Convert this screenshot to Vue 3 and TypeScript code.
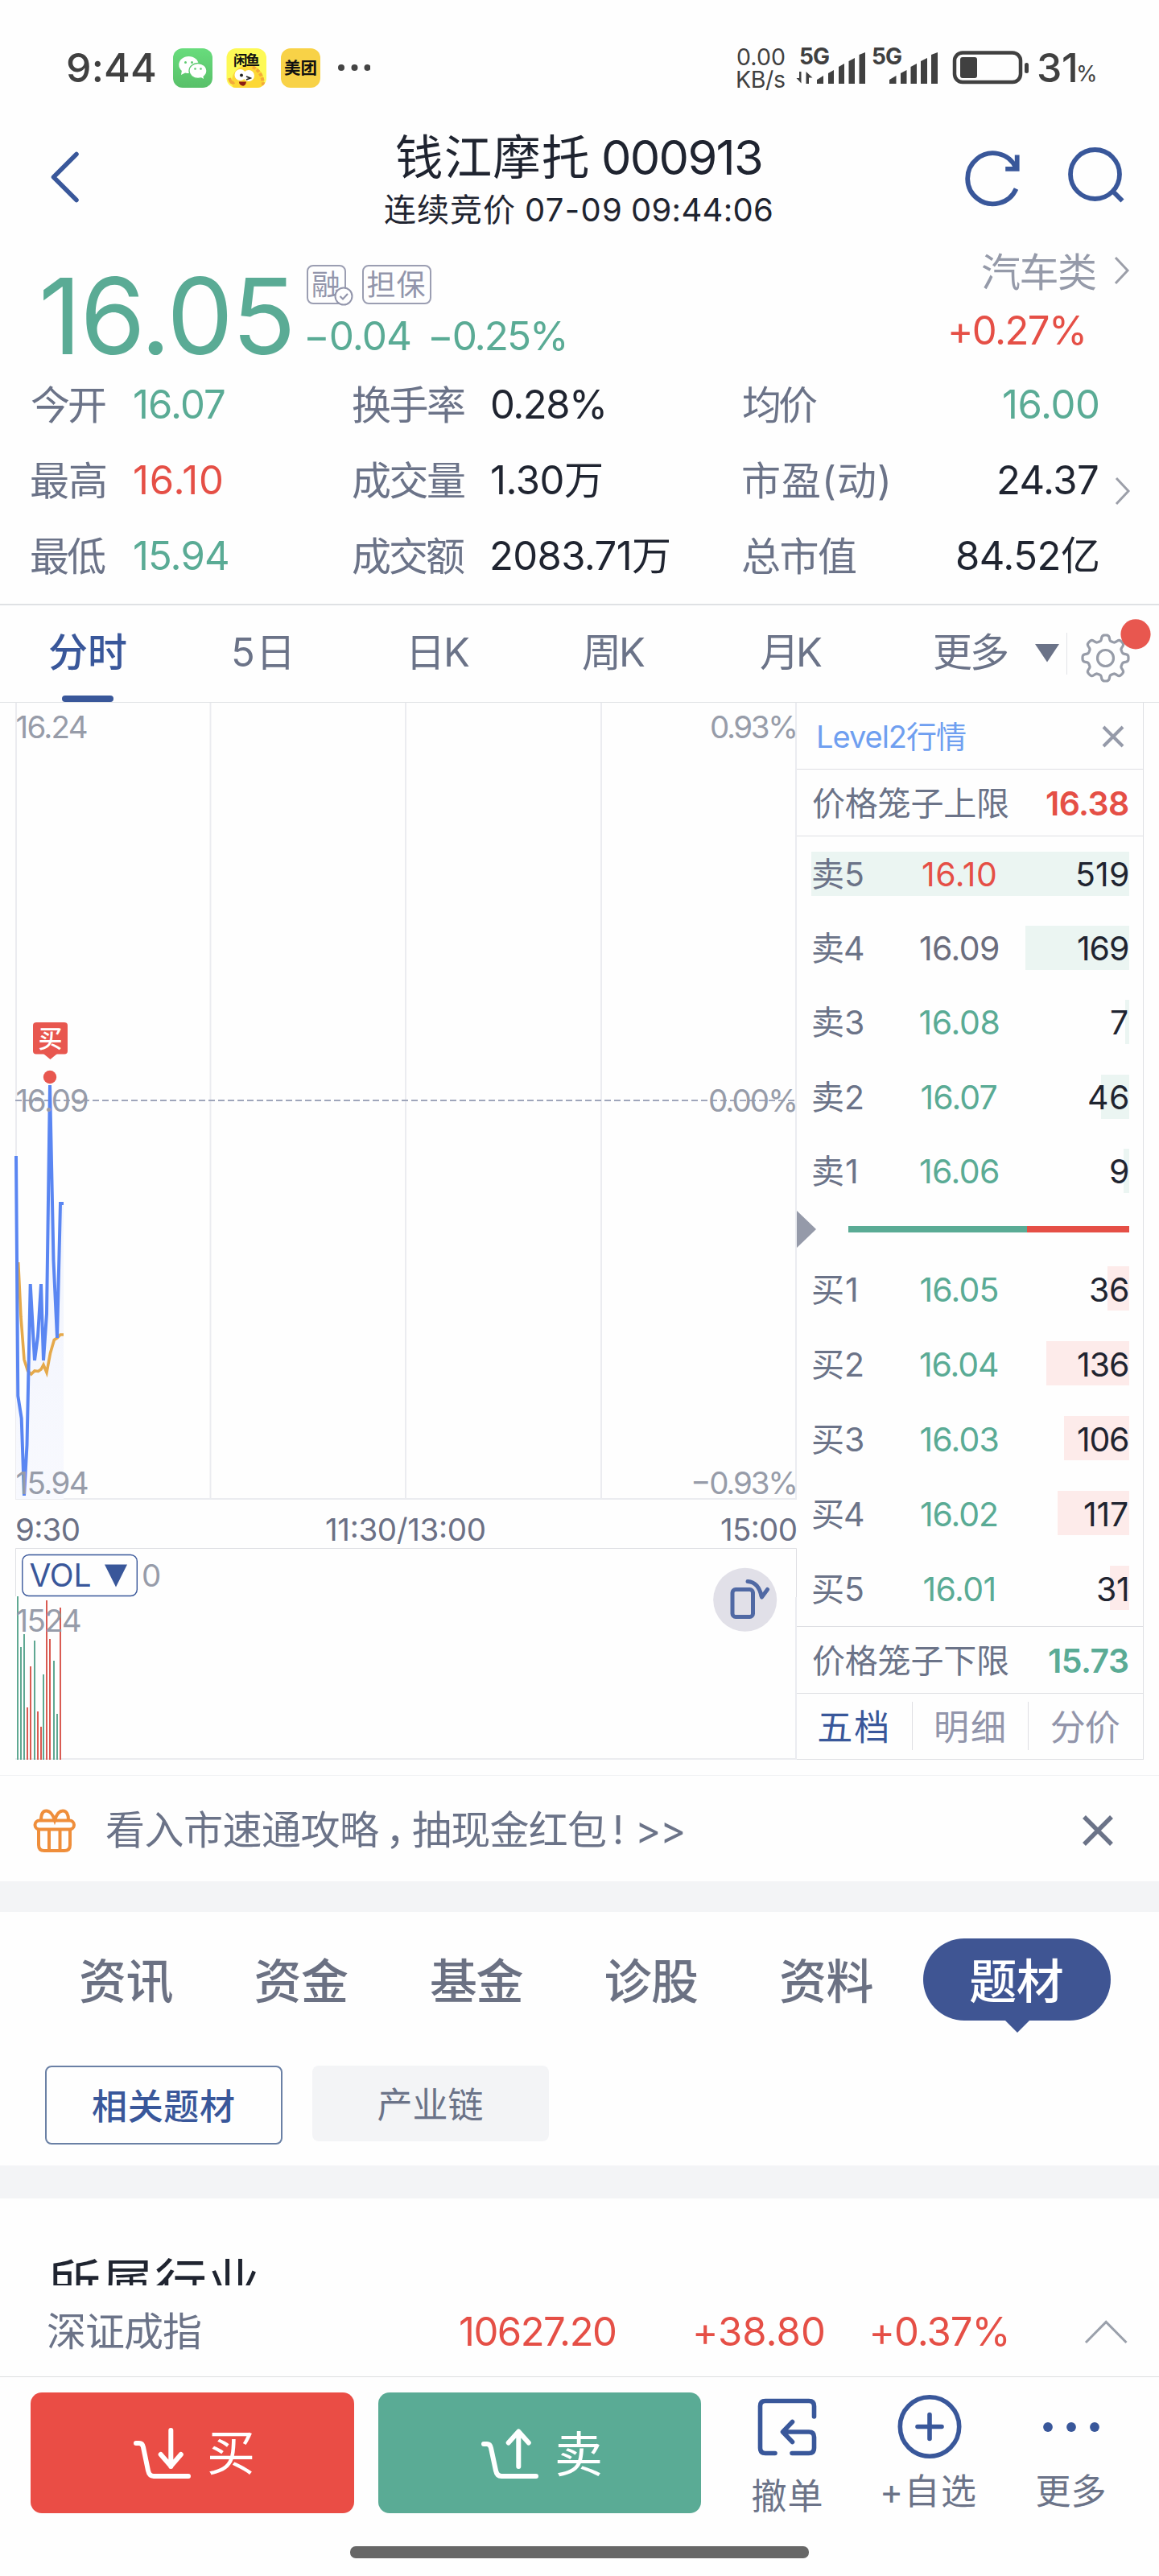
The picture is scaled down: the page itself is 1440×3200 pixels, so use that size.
<script setup lang="ts">
interface Stat { label: string; lw: number; value: string; vw: number; tone: string }
interface Level { name: string; nw: number; price: string; pw: number; tone: string; vol: number; vw: number }
interface Bar { x: number; top: number; up: boolean }

const FONT = '"Inter", "Noto Sans CJK SC", sans-serif'
const ctx = document.createElement('canvas').getContext('2d')!

// Tracks a label out to the given ink width and trims its side bearings,
// so that flex and grid tracks line up on the visible edge of the glyphs.
const vFit = {
  mounted(el: HTMLElement, binding: { value: number }) {
    const cs = getComputedStyle(el)
    const text = (el.textContent ?? '').trim()
    ctx.font = `${cs.fontWeight} ${cs.fontSize} ${FONT}`
    const m = ctx.measureText(text)
    const ink = m.actualBoundingBoxLeft + m.actualBoundingBoxRight
    const n = Array.from(text).length
    const ls = n > 1 ? (binding.value + 1 - ink) / (n - 1) : 0
    el.style.letterSpacing = `${ls}px`
    el.style.marginLeft = `${m.actualBoundingBoxLeft - 1}px`
    el.style.marginRight = `${-(ls + m.width - m.actualBoundingBoxRight)}px`
  },
}

const stats: Stat[][] = [
  [
    { label: '今开', lw: 91, value: '16.07', vw: 111, tone: 'down' },
    { label: '换手率', lw: 138, value: '0.28%', vw: 138, tone: 'ink' },
    { label: '均价', lw: 91, value: '16.00', vw: 116, tone: 'down' },
  ],
  [
    { label: '最高', lw: 91, value: '16.10', vw: 107, tone: 'up' },
    { label: '成交量', lw: 138, value: '1.30万', vw: 135, tone: 'ink' },
    { label: '市盈(动)', lw: 179, value: '24.37', vw: 122, tone: 'ink' },
  ],
  [
    { label: '最低', lw: 91, value: '15.94', vw: 115, tone: 'down' },
    { label: '成交额', lw: 138, value: '2083.71万', vw: 219, tone: 'ink' },
    { label: '总市值', lw: 139, value: '84.52亿', vw: 174, tone: 'ink' },
  ],
]

const periods = [
  { name: '分时', w: 95, on: true },
  { name: '5日', w: 68, on: false },
  { name: '日K', w: 70, on: false },
  { name: '周K', w: 76, on: false },
  { name: '月K', w: 75, on: false },
  { name: '更多', w: 90, on: false },
]

const asks: Level[] = [
  { name: '卖5', nw: 61, price: '16.10', pw: 90, tone: 'up', vol: 519, vw: 61 },
  { name: '卖4', nw: 62, price: '16.09', pw: 96, tone: 'flat', vol: 169, vw: 61 },
  { name: '卖3', nw: 61, price: '16.08', pw: 97, tone: 'down', vol: 7, vw: 20 },
  { name: '卖2', nw: 61, price: '16.07', pw: 93, tone: 'down', vol: 46, vw: 47 },
  { name: '卖1', nw: 53, price: '16.06', pw: 96, tone: 'down', vol: 9, vw: 21 },
]
const bids: Level[] = [
  { name: '买1', nw: 53, price: '16.05', pw: 95, tone: 'down', vol: 36, vw: 45 },
  { name: '买2', nw: 61, price: '16.04', pw: 96, tone: 'down', vol: 136, vw: 61 },
  { name: '买3', nw: 61, price: '16.03', pw: 95, tone: 'down', vol: 106, vw: 61 },
  { name: '买4', nw: 62, price: '16.02', pw: 94, tone: 'down', vol: 117, vw: 53 },
  { name: '买5', nw: 61, price: '16.01', pw: 87, tone: 'down', vol: 31, vw: 36 },
]
const depth = (v: number) => `${(v / 519) * 100}%`

const volume: Bar[] = [
  { x: 22, top: 1983, up: false }, { x: 26, top: 2046, up: false }, { x: 30, top: 2030, up: false },
  { x: 34, top: 2121, up: true }, { x: 38, top: 2070, up: true }, { x: 43, top: 2038, up: false },
  { x: 47, top: 2126, up: true }, { x: 51, top: 2145, up: true }, { x: 54, top: 2080, up: false },
  { x: 58, top: 1988, up: true }, { x: 62, top: 2036, up: true }, { x: 67, top: 2063, up: false },
  { x: 71, top: 2129, up: false }, { x: 75, top: 1997, up: true },
]
const trend = '20,1436 22.3,1734 26.7,1762 30,1858 33.5,1795 37.7,1595 43,1690 47,1660 51,1595 54,1690 58,1632 62,1348 66.5,1566 71,1662 75,1495 79,1495'
const average = '22.7,1568 26,1636 30,1689 34.5,1703 38.7,1707 43,1703 47.5,1703.5 51,1701 54,1695.5 58,1705 62.5,1681 67.3,1664.5 71,1662 75,1658 79,1658'

const sections = ['资讯', '资金', '基金', '诊股', '资料', '题材']

// Eight-toothed gear outline around the origin.
const gear = Array.from({ length: 192 }, (_, i) => {
  const a = (i / 192) * Math.PI * 2
  const r = 25.2 + 3.4 * Math.tanh(2.2 * Math.cos(8 * a))
  return `${(r * Math.cos(a)).toFixed(2)},${(r * Math.sin(a)).toFixed(2)}`
}).join(' ')
</script>

<template>
  <div class="screen">
    <div class="status">
      <span v-fit="108" class="clock">9:44</span>
      <svg class="apps" width="250" height="60" viewBox="210 54 250 60">
        <defs>
          <linearGradient id="wx" x1="0" y1="0" x2="0" y2="1"><stop offset="0" stop-color="#68dc7c" /><stop offset="1" stop-color="#58c069" /></linearGradient>
          <clipPath id="xy"><rect x="281.5" y="60" width="49.5" height="49" rx="12" /></clipPath>
        </defs>
        <rect x="215" y="60" width="49" height="49" rx="12" fill="url(#wx)" />
        <ellipse cx="234.500" cy="80.500" rx="12.200" ry="10.500" fill="#fff" /><path d="M226 87l-1 6 6-3z" fill="#fff" />
        <circle cx="230.500" cy="77.500" r="1.500" fill="#5ecb70" /><circle cx="238.500" cy="77.500" r="1.500" fill="#5ecb70" />
        <ellipse cx="246" cy="88" rx="11" ry="9.500" fill="#fff" stroke="#5ecb70" stroke-width="1.300" /><path d="M248 95l5 3-1-5z" fill="#fff" />
        <circle cx="242.500" cy="85.500" r="1.300" fill="#5ecb70" /><circle cx="249.500" cy="85.500" r="1.300" fill="#5ecb70" />
        <g clip-path="url(#xy)">
          <rect x="281" y="60" width="51" height="50" fill="#fdf955" />
          <circle cx="308" cy="101" r="20" fill="#fdd835" />
          <path d="M314 83q14 8 13 26" fill="none" stroke="#f3a93a" stroke-width="4" stroke-dasharray="4 2" />
          <path d="M285 97q2 8 6 5" fill="none" stroke="#f3a93a" stroke-width="4" />
          <circle cx="298.500" cy="93" r="7" fill="#fff" /><circle cx="309" cy="94" r="7" fill="#fff" />
          <circle cx="300" cy="93.500" r="2" fill="#222" /><path d="M306 99l5-2-5-2" fill="none" stroke="#222" stroke-width="1.800" />
          <path d="M297 101.500h9q-1 6-5 5-4-1-4-5z" fill="#8c1d12" />
        </g>
        <text x="290" y="81" class="app-name" font-size="17.500" textLength="33">闲鱼</text>
        <rect x="349" y="60" width="49" height="49" rx="12" fill="#f8d247" />
        <text x="353" y="91.500" class="app-name" font-size="20.500" textLength="41">美团</text>
        <g fill="#444"><circle cx="424" cy="84" r="4" /><circle cx="440.500" cy="84" r="4" /><circle cx="456.500" cy="84" r="4" /></g>
      </svg>
      <div class="rate"><span v-fit="58">0.00</span><span v-fit="58">KB/s</span></div>
      <svg class="signal" width="295" height="60" viewBox="985 54 295 60" fill="#404040">
        <g class="net"><text x="993" y="80" textLength="38">5G</text><text x="1083" y="80" textLength="38">5G</text></g>
        <path d="M995.500 89v14.500l-6-6.500h3.500v-8zM1001.500 104V89l8 7.500h-4.500v7.500z" />
        <path d="M1015 104v-5l8-5v10zM1029 104V91l7-4v17zM1042 104V83l7-4v25zM1054.500 104V76l7.500-4v32zM1067.500 104V68l7.500-3v39z" />
        <path d="M1105 104v-5l8.500-5v10zM1119 104V91l7.500-4v17zM1131.500 104V83l7.500-4v25zM1144 104V76l8-4v32zM1157 104V68l8-3v39z" />
        <rect x="1186" y="65.500" width="82" height="36.500" rx="10" fill="none" stroke="#404040" stroke-width="4.500" />
        <rect x="1193" y="71" width="21" height="26" rx="3" /><rect x="1273" y="78" width="5" height="13" rx="2.500" />
      </svg>
      <span v-fit="45" class="clock batt">31</span><div class="pct"><span v-fit="21">%</span></div>
    </div>

    <header class="head">
      <svg width="50" height="70" viewBox="56 185 50 70" class="back"><path d="M95 191.500L66.500 220l28.500 28.500" fill="none" stroke="#39579a" stroke-width="5.500" stroke-linecap="round" stroke-linejoin="round" /></svg>
      <div class="titles">
        <div class="title"><span v-fit="237">钱江摩托</span><span v-fit="195">000913</span></div>
        <div class="sub"><span v-fit="160">连续竞价</span><span v-fit="116">07-09</span><span v-fit="172">09:44:06</span></div>
      </div>
      <svg width="210" height="80" viewBox="1190 180 210 80" fill="none" stroke="#39579a" stroke-width="5.800" stroke-linecap="butt">
        <path d="M1262.500 234.500A31.500 31.500 0 1 1 1262 208" />
        <path d="M1263.700 192.500v17.300h-14.500" />
        <circle cx="1360.500" cy="216.500" r="30.500" /><path d="M1382 237l12.500 12.500" />
      </svg>
    </header>

    <section class="quote">
      <div class="price"><span v-fit="305">16.05</span></div>
      <div class="mid">
        <div class="tags">
          <span class="tag one"><span v-fit="32">融</span>
            <svg width="24" height="24" viewBox="0 0 24 24" class="tick"><circle cx="12" cy="12" r="10.500" fill="#fefefe" stroke="#9295ab" stroke-width="2" /><path d="M7.500 12l3.500 3.500 6-6.500" fill="none" stroke="#9295ab" stroke-width="2.200" /></svg>
          </span>
          <span class="tag two"><span v-fit="71">担保</span></span>
        </div>
        <div class="change"><span v-fit="127">−0.04</span><span v-fit="165">−0.25%</span></div>
      </div>
      <div class="sector">
        <div class="sector-name"><span v-fit="141">汽车类</span><svg width="22" height="40" viewBox="0 0 22 40"><path d="M4 4l15 16L4 36" fill="none" stroke="#9c9fa9" stroke-width="3" /></svg></div>
        <div class="sector-chg up"><span v-fit="164">+0.27%</span></div>
      </div>
    </section>

    <section class="stats">
      <div v-for="(row, i) in stats" :key="i" class="stat-row">
        <template v-for="s in row" :key="s.label">
          <div class="label"><span v-fit="s.lw">{{ s.label }}</span></div>
          <div class="value" :class="s.tone"><span v-fit="s.vw">{{ s.value }}</span></div>
        </template>
        <div class="more"><svg v-if="i === 1" width="22" height="40" viewBox="0 0 22 40"><path d="M4 4l15 16L4 36" fill="none" stroke="#9c9fa9" stroke-width="3" /></svg></div>
      </div>
    </section>

    <nav class="periods">
      <div v-for="p in periods" :key="p.name" class="period" :class="{ on: p.on }"><span v-fit="p.w">{{ p.name }}</span></div>
      <svg width="150" height="119" viewBox="1286 752 150 119">
        <path d="M1286 800h30l-15 22.500z" fill="#6b7388" />
        <path d="M1325.500 786v52" stroke="#e2e4e8" />
        <g transform="translate(1373.500 817.500)" fill="none" stroke="#979ca8" stroke-width="3.200"><polygon :points="gear" stroke-linejoin="round" /><circle r="10" /></g>
        <circle cx="1411" cy="787.800" r="18.600" fill="#e8574f" />
      </svg>
    </nav>

    <section class="market">
      <svg class="chart" width="990" height="1313" viewBox="0 873 990 1313">
        <defs><linearGradient id="area" x1="0" y1="0" x2="0" y2="1"><stop offset="0" stop-color="#eef2fc" /><stop offset="1" stop-color="#f8f9fe" /></linearGradient></defs>
        <path d="M20 873V1862M261.500 873V1862M504 873V1862M747 873V1862M989 873V1862M19 1862H990" fill="none" stroke="#ebecf0" stroke-width="2" />
        <path d="M19.500 1983V1923.500H989.500V1984" fill="none" stroke="#dedfe3" />
        <path d="M989 1984V2186M19 2185H990" stroke="#ebecf0" stroke-width="2" />
        <path :d="`M20,1862 L${trend} L79,1862z`" fill="url(#area)" />
        <path d="M19 1367H989" stroke="#9fa6bb" stroke-width="2" stroke-dasharray="8 4" />
        <polyline :points="average" fill="none" stroke="#e5a94b" stroke-width="3.600" />
        <polyline :points="trend" fill="none" stroke="#5a86f2" stroke-width="4" />
        <rect x="41" y="1270" width="43" height="39.500" rx="4" fill="#e8574f" /><path d="M54 1309h17l-8.500 7z" fill="#e8574f" />
        <text x="47.500" y="1301" font-size="30" fill="#fff" font-weight="500">买</text>
        <circle cx="62" cy="1338" r="8.200" fill="#e8574f" />
        <rect v-for="b in volume" :key="b.x" :x="b.x - 1" :y="b.top" width="2" :height="2186 - b.top" :fill="b.up ? '#d95b52' : '#5fa892'" />
        <g class="axis">
          <text x="19.500" y="916.500" textLength="90">16.24</text>
          <text x="19.500" y="1381" textLength="91">16.09</text>
          <text x="19.500" y="1855.500" textLength="91">15.94</text>
          <text x="882" y="916.500" textLength="110">0.93%</text>
          <text x="880" y="1381" textLength="112">0.00%</text>
          <text x="858" y="1855.500" textLength="134">−0.93%</text>
          <text x="19.500" y="2026.500" textLength="82">1524</text>
          <text x="176" y="1971">0</text>
        </g>
        <g class="time">
          <text x="19" y="1914" textLength="81">9:30</text>
          <text x="404" y="1914" textLength="200">11:30/13:00</text>
          <text x="895" y="1914" textLength="96">15:00</text>
        </g>
        <rect x="27.800" y="1931.500" width="142.500" height="51" rx="8" fill="#fefefe" stroke="#39579a" stroke-width="1.400" />
        <text x="36.500" y="1971" font-size="39" fill="#39579a" textLength="77">VOL</text><path d="M130 1943.500h28l-14 28z" fill="#39579a" />
        <circle cx="925.700" cy="1987.300" r="39.500" fill="#e1e0e8" />
        <g fill="none" stroke="#5069a4" stroke-width="5"><rect x="910" y="1974.500" width="25.500" height="34" rx="4" /><path d="M929 1964.500q13.500 1 17 18.500M953.500 1974.500l-7 9.500-2-7" stroke-linejoin="round" stroke-linecap="round" /></g>
      </svg>

      <aside class="book">
        <div class="cell l2"><span v-fit="182">Level2行情</span><svg width="28" height="28" viewBox="0 0 28 28"><path d="M2 2l24 24M26 2L2 26" stroke="#959aa9" stroke-width="4" /></svg></div>
        <div class="cell cage"><span v-fit="242">价格笼子上限</span><b v-fit="101" class="up">16.38</b></div>
        <div class="levels asks">
          <div v-for="l in asks" :key="l.name" class="level">
            <i class="depth" :style="{ width: depth(l.vol) }"></i>
            <div class="lv-name"><span v-fit="l.nw">{{ l.name }}</span></div>
            <div class="lv-price" :class="l.tone"><span v-fit="l.pw">{{ l.price }}</span></div>
            <div class="lv-vol"><span v-fit="l.vw">{{ l.vol }}</span></div>
          </div>
        </div>
        <div class="ratio"><svg width="24" height="46" viewBox="0 0 24 46"><path d="M0 0L24 23 0 46z" fill="#959aa9" /></svg><div class="ratio-bar"><i></i></div></div>
        <div class="levels bids">
          <div v-for="l in bids" :key="l.name" class="level">
            <i class="depth" :style="{ width: depth(l.vol) }"></i>
            <div class="lv-name"><span v-fit="l.nw">{{ l.name }}</span></div>
            <div class="lv-price" :class="l.tone"><span v-fit="l.pw">{{ l.price }}</span></div>
            <div class="lv-vol"><span v-fit="l.vw">{{ l.vol }}</span></div>
          </div>
        </div>
        <div class="cell cage low"><span v-fit="242">价格笼子下限</span><b v-fit="98" class="down">15.73</b></div>
        <div class="book-tabs"><div class="on"><span v-fit="84">五档</span></div><div><span v-fit="83">明细</span></div><div><span v-fit="84">分价</span></div></div>
      </aside>
    </section>

    <section class="promo">
      <svg width="56" height="58" viewBox="39 2242 56 58" fill="none" stroke="#ef8e3b" stroke-width="4">
        <rect x="43.500" y="2258.500" width="48.500" height="11" rx="5.500" />
        <path d="M48 2270v19q0 7 7 7h25q7 0 7-7v-19M61 2270v26M74.500 2270v26" />
        <path d="M51 2258c0-7 2-11.500 6.500-11.500S66 2252 68 2258c2-6 5.500-11.500 10-11.500S85 2251 85 2258" />
      </svg>
      <div class="promo-text"><span v-fit="338">看入市速通攻略</span><span class="comma">，</span><span v-fit="239">抽现金红包</span><span class="bang">!</span><span v-fit="54">&gt;&gt;</span></div>
      <svg width="38" height="38" viewBox="0 0 38 38"><path d="M2 2l34 34M36 2L2 36" stroke="#6b7388" stroke-width="5.500" /></svg>
    </section>

    <div class="band"></div>
    <section class="themes">
      <nav class="sections">
        <div v-for="(s, i) in sections" :key="s" class="sec" :class="{ on: i === 5 }"><span v-fit="113.5">{{ s }}</span></div>
      </nav>
      <div class="chips"><div class="chip on"><span v-fit="175">相关题材</span></div><div class="chip"><span v-fit="129">产业链</span></div></div>
    </section>
    <div class="band two"></div>
    <section class="industry"><span v-fit="258">所属行业</span></section>

    <section class="index">
      <div class="ix-name"><span v-fit="189">深证成指</span></div>
      <div class="ix-a"><span v-fit="191">10627.20</span></div>
      <div class="ix-b"><span v-fit="158">+38.80</span></div>
      <div class="ix-c"><span v-fit="166">+0.37%</span></div>
      <svg width="54" height="32" viewBox="1347 2879 54 32"><path d="M1349 2908l25.200-25.500L1399.500 2908" fill="none" stroke="#9aa0ab" stroke-width="3" /></svg>
    </section>

    <footer class="actions">
      <button class="buy">
        <svg width="76" height="68" viewBox="164 3010 76 68" fill="none" stroke="#fff" stroke-width="6" stroke-linecap="round" stroke-linejoin="round"><path d="M169 3032h4q4 0 5 5l6 29q1.500 7 7 7h43M212.300 3016v45M199.700 3046l12.600 14.500 12.500-14.500" /></svg>
        <span v-fit="56">买</span>
      </button>
      <button class="sell">
        <svg width="76" height="68" viewBox="596 3010 76 68" fill="none" stroke="#fff" stroke-width="6" stroke-linecap="round" stroke-linejoin="round"><path d="M601 3033h4q4 0 5 5l6 28q1.500 7 7 7h43M644.300 3061v-43M631.700 3031.500l12.600-14 12.500 14" /></svg>
        <span v-fit="56">卖</span>
      </button>
      <div class="act cancel">
        <svg width="76" height="86" viewBox="940 2972 76 86" fill="none" stroke="#39579a" stroke-width="5.600" stroke-linecap="round" stroke-linejoin="round"><path d="M1011.500 3002v-13q0-6.500-6.500-6.500h-54q-6.500 0-6.500 6.500v52q0 6.500 6.500 6.500h12M984 3047.500h21q6.500 0 6.500-6.500v-13.500q0-6.500-6.500-6.500h-31M984.500 3008.500L972.500 3021l12 12.500" /></svg>
        <span v-fit="85">撤单</span>
      </div>
      <div class="act add">
        <svg width="86" height="86" viewBox="1112 2972 86 86" fill="none" stroke="#39579a" stroke-width="5.600" stroke-linecap="round"><circle cx="1155" cy="3014.500" r="36.700" /><path d="M1155 2999.500v30M1140 3014.500h30" /></svg>
        <span v-fit="114">+自选</span>
      </div>
      <div class="act rest">
        <svg width="86" height="86" viewBox="1288 2972 86 86" fill="#39579a"><circle cx="1302" cy="3015" r="5.900" /><circle cx="1331" cy="3015" r="5.900" /><circle cx="1360" cy="3015" r="5.900" /></svg>
        <span v-fit="83">更多</span>
      </div>
    </footer>
    <div class="home"></div>
  </div>
</template>

<style>
body { background: #fefefe; }
</style>

<style scoped>
.screen { width: 1440px; height: 3200px; box-sizing: border-box; overflow: hidden; background: #fefefe; color: #6b7388; font-family: "Inter", "Noto Sans CJK SC", sans-serif; font-size: 49px; white-space: nowrap; display: flex; flex-direction: column; }
.screen * { box-sizing: border-box; }
.screen > * { flex-shrink: 0; }
svg { display: block; flex: none; }
span, b { flex: none; display: block; }
.up { color: #e54f46; }
.down { color: #5aab95; }
.flat { color: #6b6d7d; }
.ink { color: #1f2430; }

.status { height: 168px; display: flex; align-items: center; padding-left: 85px; color: #404040; line-height: 60px; }
.clock { font-size: 50px; font-weight: 500; }
.apps { margin-left: 17px; }
.app-name { font-weight: 700; fill: #111; }
.rate { margin-left: 457px; width: 58px; font-size: 28.500px; line-height: 27.500px; padding-top: 1px; }
.signal { margin-left: 10px; }
.net { font-size: 28px; font-weight: 700; }
.batt { position: relative; left: 11px; }
.pct { margin-left: 16px; font-size: 27px; line-height: 30px; padding-top: 16px; }

.head { height: 132px; display: flex; align-items: flex-start; padding-left: 56px; }
.back { margin-top: 17px; }
.titles { width: 480px; margin-left: 373px; color: #1f2430; }
.title { display: flex; gap: 20px; padding-left: 15px; font-size: 59.500px; line-height: 54px; }
.sub { display: flex; justify-content: space-between; font-size: 40px; line-height: 44px; margin-top: 17px; }
.head > svg:last-child { margin-left: 231px; margin-top: 12px; }

.quote { height: 155px; display: flex; padding: 29px 0 0 55px; }
.price { width: 326px; font-size: 131px; line-height: 96px; margin-top: 16px; color: #5aab95; }
.price, .change, .sector-chg, .label, .value, .lv-name, .lv-price, .lv-vol { display: flex; }
.mid { width: 321px; }
.tags { display: flex; gap: 20px; height: 49px; }
.tag { position: relative; display: flex; justify-content: center; border: 2px solid #9b9eb2; border-radius: 8px; font-size: 36px; line-height: 46px; color: #9295ab; }
.tag.one { width: 49px; }
.tag.two { width: 86px; }
.tick { position: absolute; right: -11px; bottom: -4px; }
.change { justify-content: space-between; padding-left: 2px; margin-top: 19px; line-height: 41px; font-size: 49.500px; color: #5aab95; }
.sector { margin-left: 480px; width: 222px; }
.sector-name { display: flex; justify-content: flex-end; gap: 20px; line-height: 46px; margin-top: -13px; height: 44px; color: #959aa9; }
.sector-chg { line-height: 40px; margin-top: 31px; }

.stats { padding: 0 0 13px 40px; border-bottom: 2px solid #dfe1e4; }
.stat-row { height: 94px; line-height: 94px; display: grid; grid-template-columns: 128px 271px 173px 312px 240px 200px 40px; align-items: center; }
.label { line-height: 92px; padding-top: 3px; }
.value:nth-child(6) { justify-content: flex-end; }
.more { padding: 26px 0 0 19px; line-height: 0; }

.periods { height: 121px; display: flex; padding-left: 62px; border-bottom: 1px solid #e1e3e6; line-height: 118px; }
.period { position: relative; display: flex; width: 229px; }
.period:nth-child(2) { width: 222px; }
.period:nth-child(3) { width: 212px; }
.period:nth-child(4) { width: 221px; }
.period:nth-child(5) { width: 216px; }
.period:nth-child(6) { width: 124px; }
.period.on { color: #39579a; font-weight: 500; }
.period.on::after { content: ""; position: absolute; left: 15px; bottom: 0; width: 64px; height: 8px; border-radius: 4px; background: #39579a; }

.market { display: flex; height: 1332px; }
.chart text { font-family: "Inter", "Noto Sans CJK SC", sans-serif; }
.axis { font-size: 38.500px; fill: #979ca9; }
.time { font-size: 38.500px; fill: #6b7085; }
.book { width: 431px; height: 1313px; border-right: 1px solid #dedfe3; border-bottom: 1px solid #dedfe3; display: flex; flex-direction: column; font-size: 41px; }
.cell { height: 83px; line-height: 84px; display: flex; align-items: center; justify-content: space-between; border-bottom: 1px solid #dedfe3; padding: 2px 18px 0 21px; }
.l2 { font-size: 38px; color: #6f9ff0; padding: 2px 23px 0 28px; }
.cage b { font-weight: 600; }
.low { border-top: 1px solid #dedfe3; height: 84px; }
.level { position: relative; height: 92.200px; line-height: 94px; margin: 0 17px 0 18px; padding: 0 2px 0 3px; display: grid; grid-template-columns: 120px 122px 1fr; }
.bids .level { height: 93px; line-height: 95px; }
.depth { position: absolute; right: 0; top: 19px; height: 55px; background: #ebf5f2; }
.bids .depth { background: #fdebea; top: 18px; }
.lv-name, .lv-price, .lv-vol { position: relative; }
.lv-price { justify-content: center; }
.lv-vol { justify-content: flex-end; color: #1f2430; }
.ratio { height: 55px; display: flex; align-items: center; }
.ratio-bar { margin-left: 40px; width: 349px; height: 8px; background: #e54f46; }
.ratio-bar i { display: block; width: 63.600%; height: 8px; background: #5aab95; }
.book-tabs { flex: 1; display: flex; align-items: center; font-size: 44px; color: #9295ab; }
.book-tabs div { width: 144px; height: 60px; line-height: 65px; display: flex; justify-content: center; }
.book-tabs div + div { border-left: 1px solid #dedfe3; }
.book-tabs .on { color: #39579a; padding-right: 3px; }

.promo { height: 132px; border-top: 1px solid #f1f2f4; display: flex; align-items: center; padding: 4px 57px 0 39px; }
.promo-text { display: flex; margin: 0 auto 0 38px; line-height: 60px; }
.comma { width: 43px; padding-left: 8px; font-feature-settings: "halt"; }
.bang { width: 42px; padding-left: 8px; }
.band { height: 38px; background: #f3f4f6; }
.band.two { height: 41px; }

.themes { height: 315px; padding-top: 33px; }
.sections { display: flex; padding-left: 49px; height: 102px; }
.sec { position: relative; width: 217.500px; display: flex; justify-content: center; font-size: 59px; line-height: 107px; font-weight: 500; color: #6b7183; }
.sec.on { margin-left: 10px; width: 233px; border-radius: 51px; background: #3f5593; color: #fff; }
.sec.on::after { content: ""; position: absolute; left: 101px; top: 101px; border: 16px solid transparent; border-top-color: #3f5593; border-bottom: 0; }
.chips { display: flex; gap: 37px; padding-left: 56px; margin-top: 56px; font-size: 44px; }
.chip { width: 294px; height: 94px; line-height: 98px; display: flex; justify-content: center; border-radius: 8px; background: #f3f4f6; }
.chip.on { width: 295px; height: 98px; border: 2px solid #6a80a5; background: #fefefe; color: #39579a; font-weight: 500; }
.industry { height: 108px; padding: 75px 0 0 62px; display: flex; align-items: flex-start; overflow: hidden; font-size: 65px; line-height: 62px; color: #1f2430; }

.index { height: 114px; border-bottom: 1px solid #dedfe1; display: flex; align-items: center; padding: 2px 0 0 60px; line-height: 60px; color: #e54f46; }
.index div { display: flex; }
.ix-name { width: 513px; color: #6b7388; }
.ix-a { width: 292px; }
.ix-b { width: 219.500px; }
.ix-c { width: 262.500px; }

.actions { height: 210px; display: flex; align-items: flex-start; padding: 19px 0 0 38px; }
button { width: 402px; height: 150px; border: 0; border-radius: 14px; padding: 0 0 0 126px; display: flex; align-items: center; gap: 21px; font: 400 60px/66px "Inter", "Noto Sans CJK SC", sans-serif; color: #fff; background: #ea4d45; }
.sell { margin-left: 30px; width: 401px; background: #5aab95; }
.sell span { padding-top: 3px; }
.act { width: 114px; display: flex; flex-direction: column; align-items: center; font-size: 44px; line-height: 50px; }
.act svg { flex: none; }
.cancel { margin-left: 50px; }
.cancel span { margin-top: 18px; }
.add { margin-left: 63px; }
.add span { margin-top: 12px; }
.rest { margin-left: 62px; }
.rest span { margin-top: 12px; }
.home { width: 570px; height: 14.500px; margin: 0 0 0 435px; border-radius: 7px; background: #676767; }
</style>
